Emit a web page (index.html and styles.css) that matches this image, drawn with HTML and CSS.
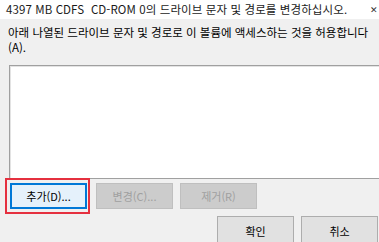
FILE: index.html
```html
<!DOCTYPE html>
<html lang="ko">
<head>
<meta charset="utf-8">
<link rel="stylesheet" href="styles.css">
</head>
<body>
<div class="window">
  <div class="titlebar">
    <span class="title">4397 MB CDFS&nbsp;&nbsp;CD-ROM 0의 드라이브 문자 및 경로를 변경하십시오.</span>
    <span class="close">✕</span>
  </div>
  <div class="content">
    <p class="desc">아래 나열된 드라이브 문자 및 경로로 이 볼륨에 액세스하는 것을 허용합니다<br>(A).</p>
    <div class="listbox"></div>
    <div class="actions">
      <div class="btn-wrap">
        <button class="btn btn-focus">추가(D)...</button>
        <span class="highlight"></span>
      </div>
      <button class="btn btn-disabled btn-mid">변경(C)...</button>
      <button class="btn btn-disabled">제거(R)</button>
    </div>
    <div class="footer">
      <button class="btn btn-ok">확인</button>
      <button class="btn btn-cancel">취소</button>
    </div>
  </div>
</div>
</body>
</html>
```

FILE: styles.css
```css
html, body {
  margin: 0;
  padding: 0;
  width: 379px;
  height: 242px;
  overflow: hidden;
  background: #f0f0f0;
}

.window {
  font-family: "Noto Sans CJK KR", "Noto Sans", sans-serif;
  font-size: 11.5px;
  color: #000;
  width: 379px;
  height: 242px;
  overflow: hidden;
}

.titlebar {
  height: 19px;
  background: #ffffff;
  display: flex;
  align-items: center;
  padding-left: 6px;
  position: relative;
  white-space: nowrap;
}

.title {
  line-height: 19px;
  color: #1a1a1a;
  letter-spacing: 0.1px;
}

.close {
  position: absolute;
  right: 1px;
  top: 0;
  line-height: 19px;
  font-size: 9px;
  color: #333;
}

.content {
  padding-left: 8px;
  display: flex;
  flex-direction: column;
}

.desc {
  margin: 6px 0 0 0;
  line-height: 15px;
  white-space: nowrap;
}

.listbox {
  margin-top: 10px;
  margin-left: 1px;
  width: 400px;
  height: 112px;
  background: #ffffff;
  border: 1px solid #a0a0a0;
  box-shadow: inset 1px 1px 0 #e3e3e3;
}

.actions {
  display: flex;
  margin-top: 4px;
  padding-left: 2px;
}

.btn-wrap {
  position: relative;
  display: flex;
}

.btn {
  font-family: inherit;
  font-size: 11px;
  width: 77px;
  height: 26px;
  padding: 0;
  margin: 0;
  border: 1px solid #adadad;
  background: #e1e1e1;
  color: #000;
  line-height: 1;
}

.btn-focus {
  border: 2px solid #0078d7;
  background: #e5f1fb;
}

.btn-mid {
  margin-left: 9px;
}

.btn-disabled {
  background: #cccccc;
  border-color: #bfbfbf;
  color: #a0a0a0;
  margin-right: 7px;
}

.highlight {
  position: absolute;
  left: -5px;
  top: -5px;
  width: 81px;
  height: 32px;
  border: 2px solid #e5303f;
}

.footer {
  display: flex;
  margin-top: 7px;
  padding-left: 209px;
  gap: 7px;
}

.btn-ok, .btn-cancel {
  height: 30px;
  flex-shrink: 0;
}
```
